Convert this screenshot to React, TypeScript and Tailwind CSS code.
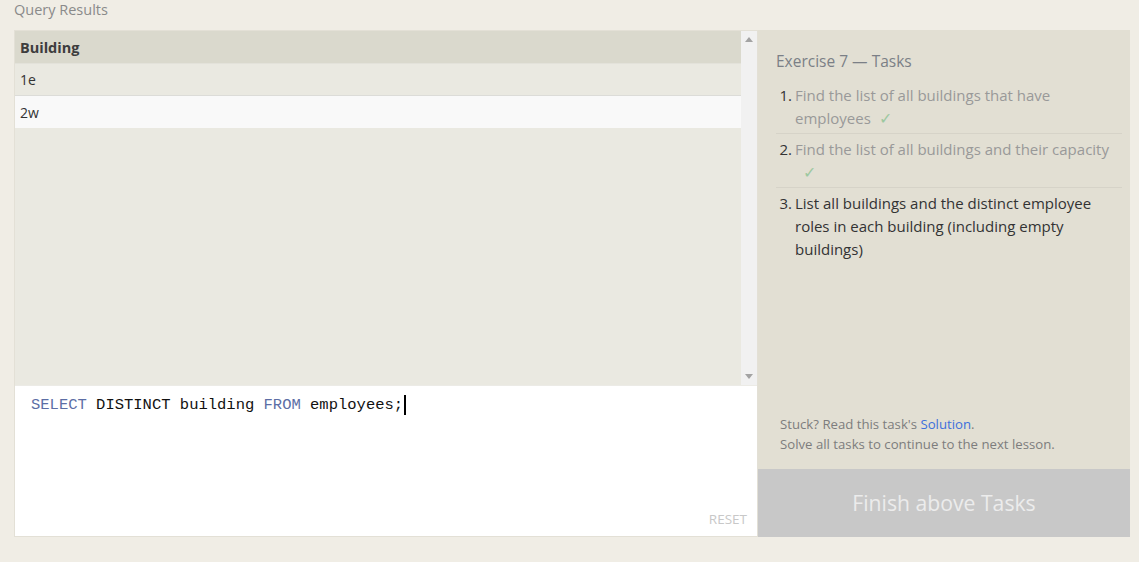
import React from "react";

function Check() {
  return <span className="inline-block ml-[8px] text-[16px] leading-[20px] text-[#9dc8a0]">✓</span>;
}

export default function App() {
  return (
    <div className="w-[1139px] h-[562px] bg-[#f0ede5] font-['Open_Sans',sans-serif] overflow-hidden">
      <div className="pl-[14px] pt-[0px] h-[30px] text-[14.5px] leading-[20px] text-[#8a8a8a]">Query Results</div>
      <div className="flex pl-[14px] h-[507px]">
        {/* Left panel */}
        <div className="w-[744px] flex flex-col border border-[#e3e0d6]">
          <div className="flex h-[354px] bg-[#eae9e1]">
            <div className="flex-1 flex flex-col">
              <div className="h-[33px] bg-[#dad9cd] border-b border-[#e3e2da] flex items-center px-[5px] pt-[1px] text-[14.5px] font-bold text-[#3d3d3d]">Building</div>
              <div className="h-[32px] bg-[#eae9e1] border-b border-[#dcdcd8] flex items-center px-[5px] text-[14px] text-[#333]">1e</div>
              <div className="h-[32px] bg-[#f9f9f9] flex items-center px-[5px] text-[14px] text-[#333]">2w</div>
            </div>
            <div className="w-[16px] bg-[#f1f1f1] flex flex-col justify-between items-center py-[6px]">
              <svg width="8" height="5" viewBox="0 0 8 5"><path d="M0 5 L4 0 L8 5 Z" fill="#a3a3a3" /></svg>
              <svg width="8" height="5" viewBox="0 0 8 5"><path d="M0 0 L4 5 L8 0 Z" fill="#a3a3a3" /></svg>
            </div>
          </div>
          <div className="flex-1 bg-white flex flex-col border-t border-[#ecebe6]">
            <div className="pl-[16px] pt-[9px] font-['Liberation_Mono',monospace] text-[15.5px] leading-[20px] text-[#111] flex items-center">
              <span className="text-[#5c6ea5]">SELECT</span>
              <span>&nbsp;DISTINCT building&nbsp;</span>
              <span className="text-[#5c6ea5]">FROM</span>
              <span>&nbsp;employees;</span>
              <span className="inline-block w-[2px] h-[20px] bg-black ml-[1px]"></span>
            </div>
            <div className="flex-1"></div>
            <div className="flex justify-end pr-[10px] pb-[8px] text-[13.5px] leading-[18px] text-[#c8c8c8]">RESET</div>
          </div>
        </div>
        {/* Right panel */}
        <div className="w-[372px] bg-[#e2dfd3] flex flex-col">
          <div className="flex-1 pl-[18px] pr-[8px] pt-[20px]">
            <div className="text-[15.5px] leading-[22px] text-[#7b7f86]">Exercise 7 — Tasks</div>
            <ol className="mt-[12px] text-[15px] leading-[23px]">
              <li className="flex border-b border-[#d6d3c8] pb-[3px]">
                <span className="w-[19px] text-right pr-[3px] text-[#333]">1.</span>
                <span className="flex-1 text-[#999]">Find the list of all buildings that have employees<Check /></span>
              </li>
              <li className="flex border-b border-[#d6d3c8] pt-[4px] pb-[3px]">
                <span className="w-[19px] text-right pr-[3px] text-[#333]">2.</span>
                <span className="flex-1 text-[#999]">Find the list of all buildings and their capacity <Check /></span>
              </li>
              <li className="flex pt-[4px]">
                <span className="w-[19px] text-right pr-[3px] text-[#333]">3.</span>
                <span className="flex-1 text-[#333]">List all buildings and the distinct employee roles in each building (including empty buildings)</span>
              </li>
            </ol>
          </div>
          <div className="pl-[22px] pb-[15px] text-[13.2px] leading-[20px] text-[#7d7d7d]">
            <div>Stuck? Read this task's <span className="text-[#3d6fdc]">Solution</span>.</div>
            <div>Solve all tasks to continue to the next lesson.</div>
          </div>
          <div className="h-[68px] bg-[#c8c8c8] flex items-center justify-center text-[21.2px] text-[#ececec]">Finish above Tasks</div>
        </div>
      </div>
    </div>
  );
}
